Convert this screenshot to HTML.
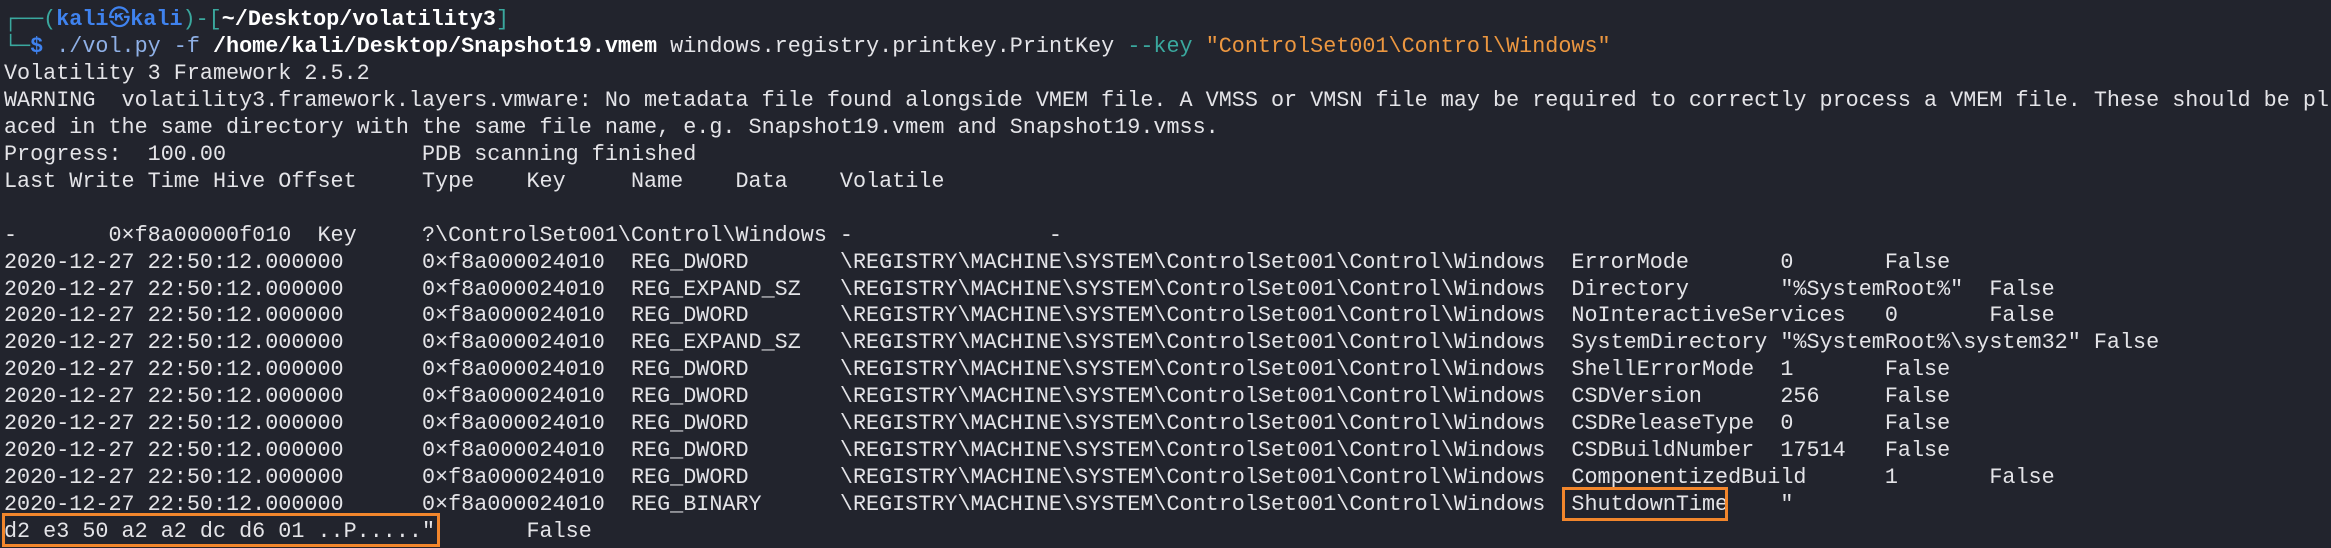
<!DOCTYPE html>
<html><head><meta charset="utf-8">
<style>
html,body{margin:0;padding:0;background:#22242d;}
body{width:2331px;height:548px;overflow:hidden;position:relative;}
pre{margin:0;position:absolute;left:4px;top:7px;font-family:"Liberation Mono","DejaVu Sans Mono","Noto Sans CJK JP",monospace;font-size:21.77px;line-height:26.95px;color:#e4e4e8;white-space:pre;}
.t{color:#3aa89e}
.b{color:#3f82ee;font-weight:bold}
.w{color:#ffffff;font-weight:bold}
.c{color:#8fb0e6}
.o{color:#ec9740}
.box{position:absolute;border:3px solid #f2862c;box-sizing:border-box;}
</style></head><body>
<pre><span class="t">┌──(</span><span class="b">kali㉿kali</span><span class="t">)-[</span><span class="w">~/Desktop/volatility3</span><span class="t">]</span>
<span class="t">└─</span><span class="b">$</span> <span class="c">./vol.py -f</span> <span class="w">/home/kali/Desktop/Snapshot19.vmem</span> windows.registry.printkey.PrintKey <span class="t">--key</span> <span class="o">"ControlSet001\Control\Windows"</span>
Volatility 3 Framework 2.5.2
WARNING  volatility3.framework.layers.vmware: No metadata file found alongside VMEM file. A VMSS or VMSN file may be required to correctly process a VMEM file. These should be pl
aced in the same directory with the same file name, e.g. Snapshot19.vmem and Snapshot19.vmss.
Progress:  100.00               PDB scanning finished
Last Write Time Hive Offset     Type    Key     Name    Data    Volatile

-       0×f8a00000f010  Key     ?\ControlSet001\Control\Windows -               -
2020-12-27 22:50:12.000000      0×f8a000024010  REG_DWORD       \REGISTRY\MACHINE\SYSTEM\ControlSet001\Control\Windows  ErrorMode       0       False
2020-12-27 22:50:12.000000      0×f8a000024010  REG_EXPAND_SZ   \REGISTRY\MACHINE\SYSTEM\ControlSet001\Control\Windows  Directory       "%SystemRoot%"  False
2020-12-27 22:50:12.000000      0×f8a000024010  REG_DWORD       \REGISTRY\MACHINE\SYSTEM\ControlSet001\Control\Windows  NoInteractiveServices   0       False
2020-12-27 22:50:12.000000      0×f8a000024010  REG_EXPAND_SZ   \REGISTRY\MACHINE\SYSTEM\ControlSet001\Control\Windows  SystemDirectory "%SystemRoot%\system32" False
2020-12-27 22:50:12.000000      0×f8a000024010  REG_DWORD       \REGISTRY\MACHINE\SYSTEM\ControlSet001\Control\Windows  ShellErrorMode  1       False
2020-12-27 22:50:12.000000      0×f8a000024010  REG_DWORD       \REGISTRY\MACHINE\SYSTEM\ControlSet001\Control\Windows  CSDVersion      256     False
2020-12-27 22:50:12.000000      0×f8a000024010  REG_DWORD       \REGISTRY\MACHINE\SYSTEM\ControlSet001\Control\Windows  CSDReleaseType  0       False
2020-12-27 22:50:12.000000      0×f8a000024010  REG_DWORD       \REGISTRY\MACHINE\SYSTEM\ControlSet001\Control\Windows  CSDBuildNumber  17514   False
2020-12-27 22:50:12.000000      0×f8a000024010  REG_DWORD       \REGISTRY\MACHINE\SYSTEM\ControlSet001\Control\Windows  ComponentizedBuild      1       False
2020-12-27 22:50:12.000000      0×f8a000024010  REG_BINARY      \REGISTRY\MACHINE\SYSTEM\ControlSet001\Control\Windows  ShutdownTime    "
d2 e3 50 a2 a2 dc d6 01 ..P....."       False</pre>
<div class="box" style="left:1562px;top:487px;width:166px;height:34px;"></div>
<div class="box" style="left:2px;top:513px;width:438px;height:34px;"></div>
</body></html>
